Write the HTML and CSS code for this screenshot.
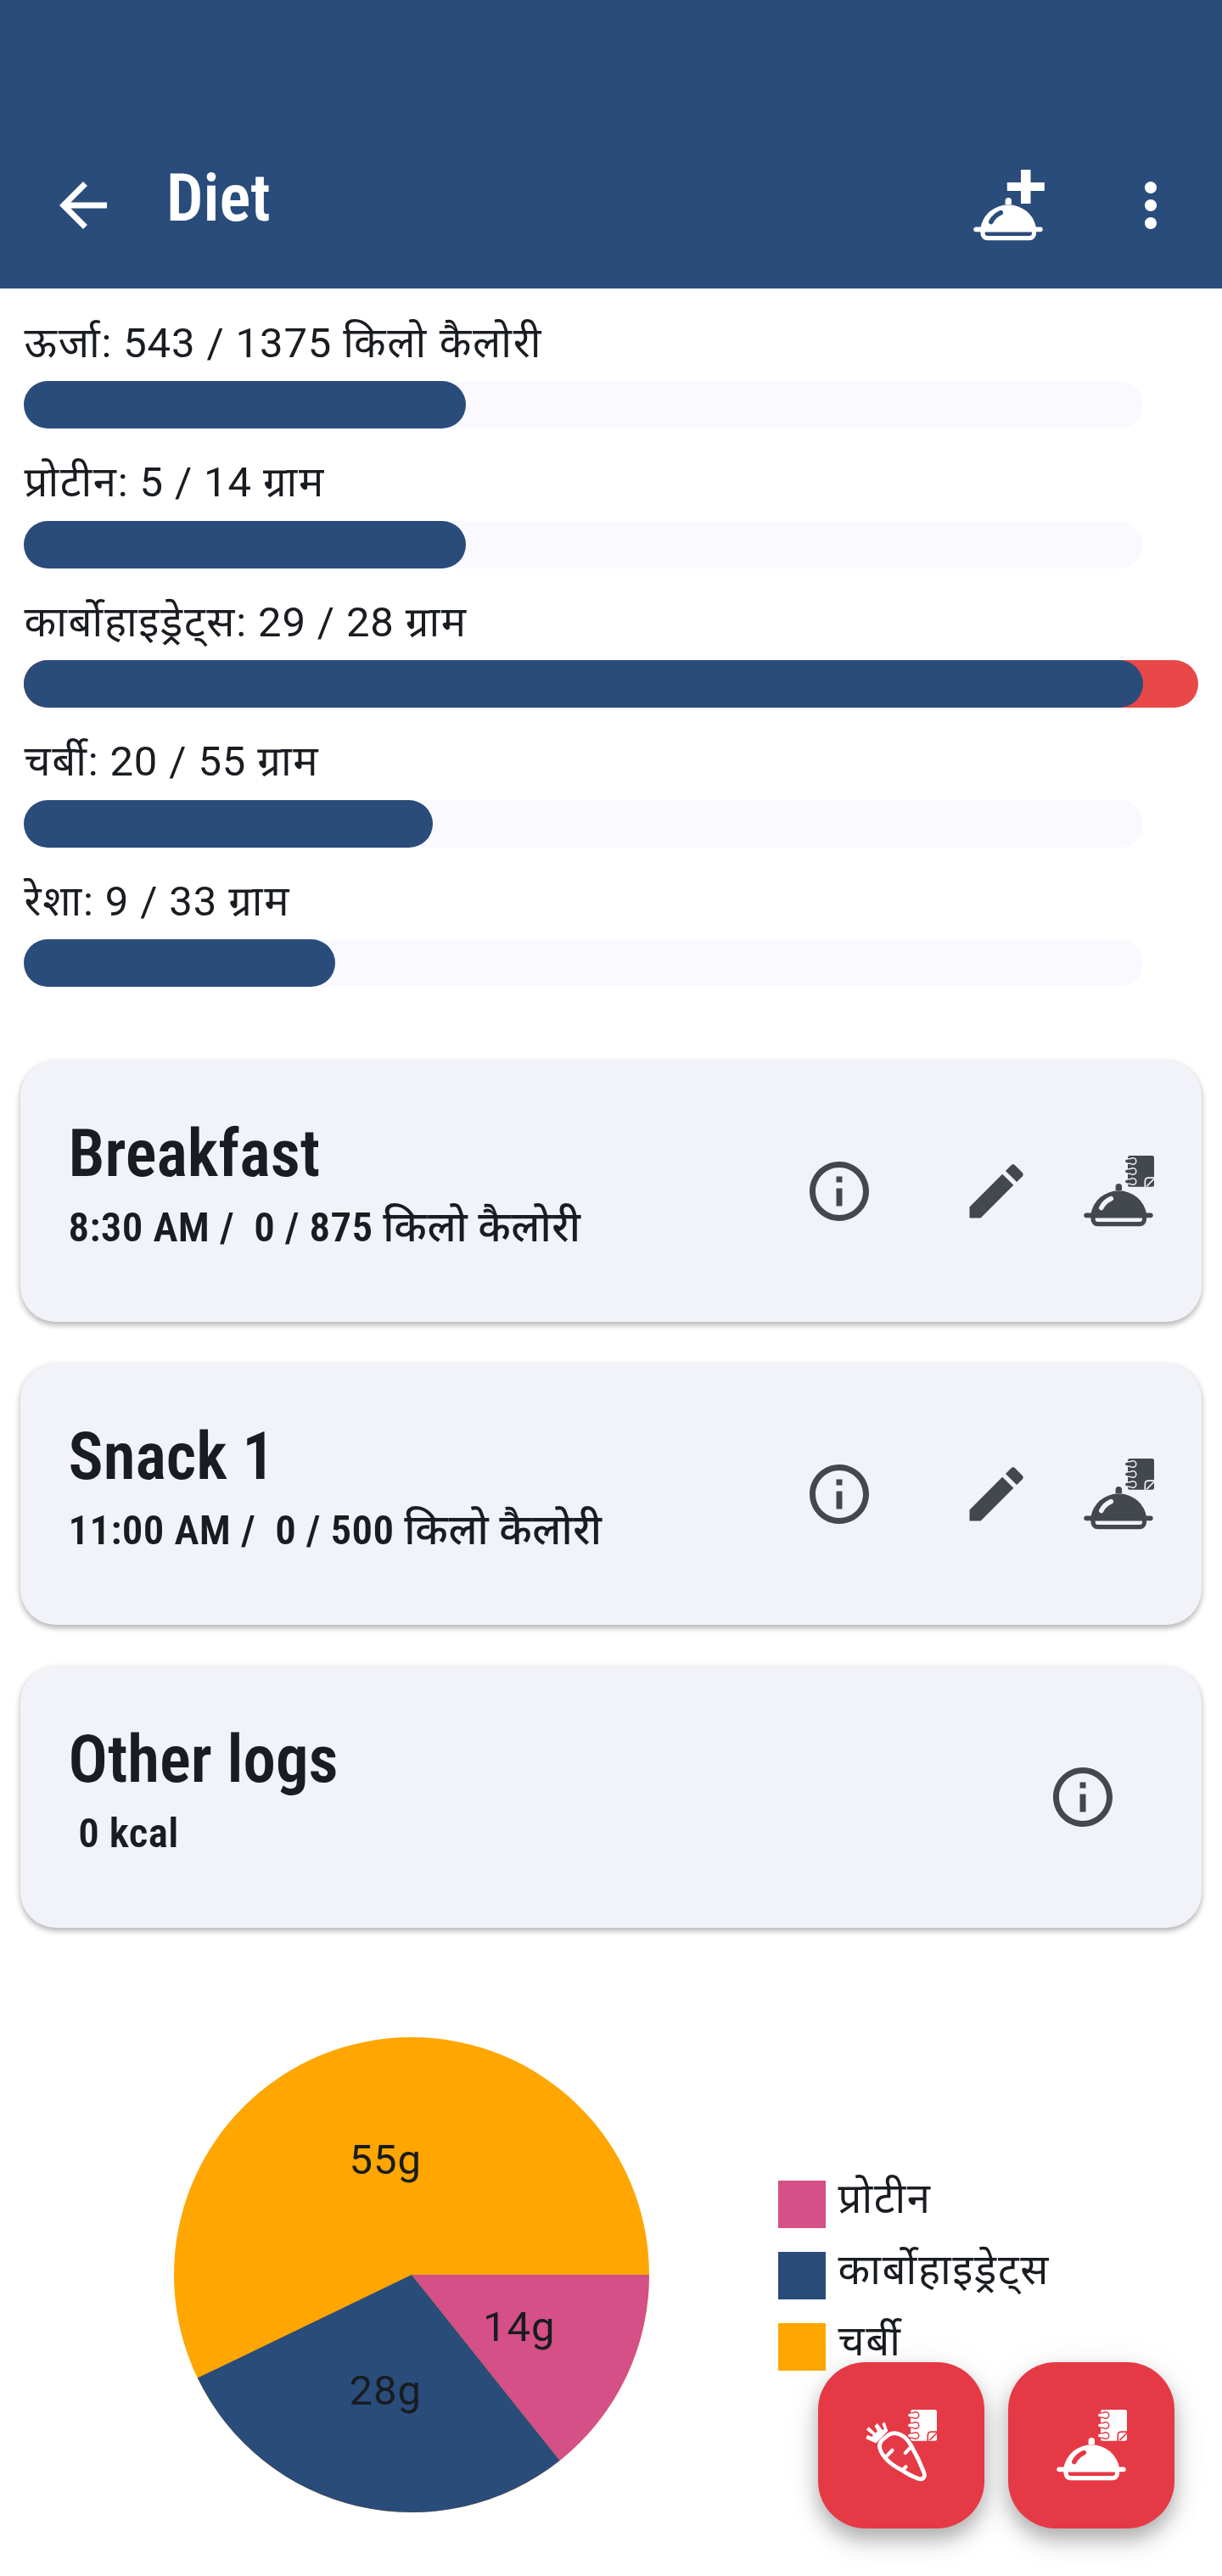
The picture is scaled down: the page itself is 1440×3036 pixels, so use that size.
FILE: index.html
```html
<!DOCTYPE html>
<html lang="hi">
<head>
<meta charset="utf-8">
<title>Diet</title>
<link rel="stylesheet" href="styles.css">
</head>
<body>
<svg class="defs" aria-hidden="true">
  <symbol id="dish" viewBox="0 0 84 84">
    <path fill="currentColor" d="M9.5 71V69A33 31.5 0 0 1 75 69V74H9.5Z"/>
    <path fill="currentColor" d="M38.6 41V36.6a3.7 3.7 0 0 1 7.4 0V41Z"/>
    <path class="stroke" stroke-width="5.8" d="M4.2 70.3H79.8"/>
    <path fill="currentColor" d="M9.5 71H75V75.3a8 8 0 0 1-8 8H17.5a8 8 0 0 1-8-8Z"/>
    <path class="slot" d="M14.7 73.4H70V75a3 3 0 0 1-3 3H17.7a3 3 0 0 1-3-3Z"/>
    <path class="cut" stroke-width="5.6" d="M21.8 61.5Q25.5 54 33.3 50.7"/>
  </symbol>
  <symbol id="notebook" viewBox="0 0 84 84">
    <rect x="53" y="0" width="31" height="36.7" rx="2.5" fill="currentColor"/>
    <path class="cut" stroke-width="1.5" d="M53.5 3.8H56Q57.5 2.5 59 2.7A3.8 3.8 0 0 1 59 10.3Q57.5 10.5 56 9.2H53.5M53.5 15.8H56Q57.5 14.5 59 14.7A3.8 3.8 0 0 1 59 22.3Q57.5 22.5 56 21.2H53.5M53.5 27.8H56Q57.5 26.5 59 26.7A3.8 3.8 0 0 1 59 34.3Q57.5 34.5 56 33.2H53.5"/>
    <path class="stroke" stroke-width="3.4" d="M51.8 6.5H59M51.8 18.5H59M51.8 30.5H59"/>
    <path class="cut" stroke-width="1.7" d="M73.3 37V30.5Q73.3 26.2 77.3 26.2H84M75.8 35.6 83.8 27.5"/>
  </symbol>
  <symbol id="info" viewBox="0 0 24 24">
    <path fill="currentColor" d="M11 7h2v2h-2zm0 4h2v6h-2zm1-9C6.48 2 2 6.48 2 12s4.48 10 10 10 10-4.48 10-10S17.52 2 12 2zm0 18c-4.41 0-8-3.59-8-8s3.59-8 8-8 8 3.59 8 8-3.59 8-8 8z"/>
  </symbol>
  <symbol id="edit" viewBox="0 0 24 24">
    <path fill="currentColor" d="M3 17.25V21h3.75L17.81 9.94l-3.75-3.75L3 17.25zM20.71 7.04a.996.996 0 0 0 0-1.41l-2.34-2.34a.996.996 0 0 0-1.41 0l-1.83 1.83 3.75 3.75 1.83-1.83z"/>
  </symbol>
</svg>

<header class="app-bar">
  <svg class="icon" viewBox="0 0 24 24"><path fill="currentColor" d="M20 11H7.83l5.59-5.59L12 4l-8 8 8 8 1.41-1.41L7.83 13H20v-2z"/></svg>
  <h1 class="app-title">Diet</h1>
  <svg class="icon add-meal" viewBox="0 0 84 84"><use href="#dish"/><path fill="currentColor" d="M57 0H68.5V15H84.8V25H68.5V40H57V25H40.8V15H57Z"/></svg>
  <svg class="icon" viewBox="0 0 24 24"><path fill="currentColor" d="M12 8c1.1 0 2-.9 2-2s-.9-2-2-2-2 .9-2 2 .9 2 2 2zm0 2c-1.1 0-2 .9-2 2s.9 2 2 2 2-.9 2-2-.9-2-2-2zm0 6c-1.1 0-2 .9-2 2s.9 2 2 2 2-.9 2-2-.9-2-2-2z"/></svg>
</header>

<main>
  <section class="goals">
    <div class="goal"><div class="label"><span class="hi">ऊर्जा</span>: 543 / 1375 <span class="hi">किलो कैलोरी</span></div><div class="bar"><div class="track"><div class="fill" style="width:39.48%"></div></div></div></div>
    <div class="goal"><div class="label"><span class="hi">प्रोटीन</span>: 5 / 14 <span class="hi">ग्राम</span></div><div class="bar"><div class="track"><div class="fill" style="width:39.48%"></div></div></div></div>
    <div class="goal"><div class="label"><span class="hi">कार्बोहाइड्रेट्स</span>: 29 / 28 <span class="hi">ग्राम</span></div><div class="bar over"><div class="track"><div class="fill" style="width:100%"></div></div></div></div>
    <div class="goal"><div class="label"><span class="hi">चर्बी</span>: 20 / 55 <span class="hi">ग्राम</span></div><div class="bar"><div class="track"><div class="fill" style="width:36.55%"></div></div></div></div>
    <div class="goal"><div class="label"><span class="hi">रेशा</span>: 9 / 33 <span class="hi">ग्राम</span></div><div class="bar"><div class="track"><div class="fill" style="width:27.85%"></div></div></div></div>
  </section>

  <section class="meals">
    <article class="card">
      <div class="meal"><h2>Breakfast</h2><p>8:30 AM /&nbsp; 0 / 875 <span class="unit">किलो कैलोरी</span></p></div>
      <svg class="icon info"><use href="#info"/></svg>
      <svg class="icon edit"><use href="#edit"/></svg>
      <svg class="icon" viewBox="0 0 84 84"><use href="#notebook"/><use href="#dish"/></svg>
    </article>
    <article class="card">
      <div class="meal"><h2>Snack 1</h2><p>11:00 AM /&nbsp; 0 / 500 <span class="unit">किलो कैलोरी</span></p></div>
      <svg class="icon info"><use href="#info"/></svg>
      <svg class="icon edit"><use href="#edit"/></svg>
      <svg class="icon" viewBox="0 0 84 84"><use href="#notebook"/><use href="#dish"/></svg>
    </article>
    <article class="card logs">
      <div class="meal"><h2>Other logs</h2><p>&nbsp;0 kcal</p></div>
      <svg class="icon"><use href="#info"/></svg>
    </article>
  </section>

  <section class="macros">
    <svg class="pie" viewBox="-280 -280 560 560">
      <circle r="280" fill="#ffa600"/>
      <path fill="#d45087" d="M0 0H280A280 280 0 0 1 174.6 218.9Z"/>
      <path fill="#2a4c7b" d="M0 0L174.6 218.9A280 280 0 0 1 -252.2 121.6Z"/>
      <text x="-73.5" y="-119.5">55g</text>
      <text x="84" y="77.5">14g</text>
      <text x="-73.5" y="153">28g</text>
    </svg>
    <ul class="legend">
      <li><i class="swatch protein"></i><span class="hi">प्रोटीन</span></li>
      <li><i class="swatch carbs"></i><span class="hi">कार्बोहाइड्रेट्स</span></li>
      <li><i class="swatch fat"></i><span class="hi">चर्बी</span></li>
    </ul>
  </section>
</main>

<div class="fabs">
  <button class="fab"><svg class="icon" viewBox="0 0 84 84"><use href="#notebook"/>
    <path class="body" d="M27.3 29.5Q31 27.5 35 27.7C43 28.5 49 34 53.5 42C59 51.5 65 64 69 74.5C70.5 80 67.5 83 62 81.2C55 78.5 48 75 43.3 71.5C34 67 28 62.5 23.3 57C19 52 16.5 46 16.4 42.5C16.5 39 18 37 20.5 35Z"/>
    <path class="stroke" stroke-width="4.2" d="M31.5 47.8 23 56.5M53 44.5 46.8 51M47.5 67.3 44 71"/>
    <path fill="currentColor" d="M12.2 39.5.3 34 2.2 29.8 7.2 32 9 30 .8 23.5 3.8 20.3 11.5 27.5 14 25.5 10.5 19 14 16 19.8 24 22 23 19.3 16.5 22.6 14.6 26.3 25Z"/></svg></button>
  <button class="fab"><svg class="icon" viewBox="0 0 84 84"><use href="#notebook"/><use href="#dish"/></svg></button>
</div>
</body>
</html>
```
FILE: styles.css
```css
* { box-sizing: border-box; }

body {
  margin: 0;
  height: 3036px;
  overflow: hidden;
  background: #fff;
  color: #191c20;
  font-family: Roboto, "Noto Sans Devanagari", "Noto Sans", sans-serif;
  font-size: 49px;
  letter-spacing: 0.875px;
}

h1, h2, p, ul { margin: 0; padding: 0; }

.hi { letter-spacing: 1.7px; }

.defs { display: none; }

.icon {
  display: block;
  flex: none;
  width: 84px;
  height: 84px;
  overflow: visible;
}

.stroke { fill: none; stroke: currentColor; stroke-linecap: round; }
.cut { fill: none; stroke: var(--surface); stroke-linecap: round; }
.slot { fill: var(--surface); }

.app-bar {
  --surface: #2a4c7b;
  display: flex;
  align-items: flex-start;
  height: 340px;
  padding: 200px 42px 0 56px;
  background: var(--surface);
  color: #fff;
}

.app-title {
  margin: -11px 0 0 56px;
  font: 600 77px/90px "Roboto Condensed", Roboto, sans-serif;
  letter-spacing: 0;
}

.add-meal { margin: 0 84.5px 0 auto; }

.goals {
  display: grid;
  gap: 28.5px;
  padding: 29.5px 28px 0;
}

.goal { height: 136px; }

.label {
  height: 70px;
  padding-left: 0.5px;
  line-height: 70px;
}

.bar {
  height: 56px;
  margin-top: 9.5px;
  border-radius: 28px;
}

.over { background: #e84848; }

.track {
  width: 1318.5px;
  height: 56px;
  border-radius: 28px;
  background: #f9f9ff;
}

.over .track { background: none; }

.fill {
  height: 56px;
  border-radius: 28px;
  background: #2a4c7b;
}

.meals {
  display: grid;
  gap: 49px;
  padding: 86.5px 24.5px 0 24px;
}

.card {
  --surface: #f2f3f9;
  display: flex;
  align-items: center;
  height: 308px;
  padding: 0 56px 0 56.5px;
  border-radius: 42px;
  background: var(--surface);
  color: #43474e;
  box-shadow: 0 3.5px 6px rgba(0, 0, 0, 0.24), 0 2px 10px rgba(0, 0, 0, 0.08);
}

.meal {
  flex: 1;
  align-self: flex-start;
  padding-top: 65px;
  color: #191c20;
}

.meal h2 {
  font: 600 77px/90px "Roboto Condensed", Roboto, sans-serif;
  letter-spacing: 0;
}

.meal p {
  margin-top: 13px;
  font: 600 49px/58px "Roboto Condensed", Roboto, "Noto Sans Devanagari", sans-serif;
  letter-spacing: 0.35px;
}

.meal .unit { font-weight: 500; letter-spacing: 0.6px; }

.info { margin-right: 101px; }
.edit { margin-right: 60px; }
.logs { padding-right: 97.5px; }

.macros {
  display: flex;
  align-items: flex-start;
  padding: 129px 0 0 205px;
}

.pie { display: block; width: 560px; height: 560px; }
.pie text { fill: #191c20; letter-spacing: 1px; }

.legend {
  display: grid;
  gap: 28px;
  margin: 168.5px 0 0 152px;
  list-style: none;
}

.legend li {
  display: flex;
  gap: 14.5px;
  height: 56px;
}

.legend span { margin-top: -6px; line-height: 56px; }

.swatch { width: 56px; height: 56px; }
.protein { background: #d45087; }
.carbs { background: #2a4c7b; }
.fat { background: #ffa600; }

.fabs {
  position: absolute;
  top: 2784px;
  left: 964px;
  display: flex;
  gap: 28px;
}

.fab {
  --surface: #e63946;
  width: 196px;
  height: 196px;
  padding: 56px;
  border: 0;
  border-radius: 56px;
  background: var(--surface);
  color: #fff;
  box-shadow: 0 12px 20px rgba(0, 0, 0, 0.2), 0 16px 35px rgba(0, 0, 0, 0.12), 0 3.5px 50px rgba(0, 0, 0, 0.05);
}

.body {
  fill: var(--surface);
  stroke: currentColor;
  stroke-width: 4.8px;
  stroke-linejoin: round;
}
```
